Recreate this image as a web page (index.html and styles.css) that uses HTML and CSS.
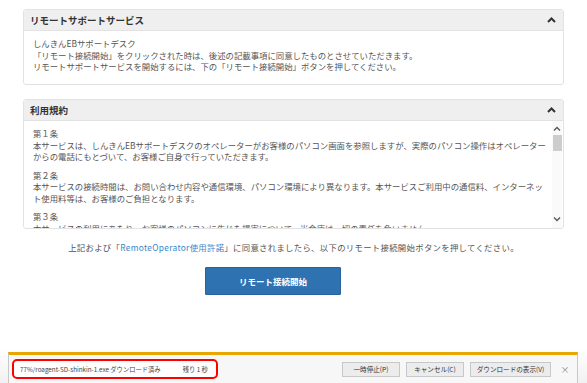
FILE: index.html
```html
<!DOCTYPE html>
<html lang="ja">
<head>
    <meta charset="UTF-8">
    <meta name="viewport" content="width=device-width, initial-scale=1.0">
    <title>リモートサポートサービス</title>
    <link rel="stylesheet" href="styles.css">
</head>
<body>
    <div class="page">
        <div class="panel">
            <div class="panel-head">
                <span>リモートサポートサービス</span>
                <svg class="caret" width="9" height="6" viewBox="0 0 9 6"><polyline points="1,5 4.5,1.5 8,5" fill="none" stroke="#333" stroke-width="2"/></svg>
            </div>
            <div class="panel-body intro">
                <p>しんきんEBサポートデスク<br>「リモート接続開始」をクリックされた時は、後述の記載事項に同意したものとさせていただきます。<br>リモートサポートサービスを開始するには、下の「リモート接続開始」ボタンを押してください。</p>
            </div>
        </div>

        <div class="panel terms">
            <div class="panel-head">
                <span>利用規約</span>
                <svg class="caret" width="9" height="6" viewBox="0 0 9 6"><polyline points="1,5 4.5,1.5 8,5" fill="none" stroke="#333" stroke-width="2"/></svg>
            </div>
            <div class="panel-body scroll-body">
                <div class="scroll-text">
                    <p>第１条<br>本サービスは、しんきんEBサポートデスクのオペレーターがお客様のパソコン画面を参照しますが、実際のパソコン操作はオペレーター<br>からの電話にもとづいて、お客様ご自身で行っていただきます。</p>
                    <p>第２条<br>本サービスの接続時間は、お問い合わせ内容や通信環境、パソコン環境により異なります。本サービスご利用中の通信料、インターネッ<br>ト使用料等は、お客様のご負担となります。</p>
                    <p>第３条<br>本サービスの利用にあたり、お客様のパソコンに生じた損害について、当金庫は一切の責任を負いません。</p>
                </div>
                <div class="scrollbar">
                    <svg width="8" height="6" viewBox="0 0 8 6"><polyline points="1,4.5 4,1.5 7,4.5" fill="none" stroke="#555" stroke-width="1.3"/></svg>
                    <div class="thumb"></div>
                    <div class="track"></div>
                    <svg width="8" height="6" viewBox="0 0 8 6"><polyline points="1,1.5 4,4.5 7,1.5" fill="none" stroke="#555" stroke-width="1.3"/></svg>
                </div>
            </div>
        </div>

        <p class="agree">上記および「<a href="#">RemoteOperator使用許諾</a>」に同意されましたら、以下のリモート接続開始ボタンを押してください。</p>
        <div class="actions">
            <button class="start-btn">リモート接続開始</button>
        </div>
    </div>

    <div class="download">
        <div class="dl-bar">
            <div class="dl-status">
                <span>77%/roagent-SD-shinkin-1.exe ダウンロード済み</span>
                <span class="dl-left">残り 1 秒</span>
            </div>
            <div class="dl-buttons">
                <button class="dl-btn">一時停止(P)</button>
                <button class="dl-btn">キャンセル(C)</button>
                <button class="dl-btn wide">ダウンロードの表示(V)</button>
                <span class="dl-close">×</span>
            </div>
        </div>
    </div>
</body>
</html>
```

FILE: styles.css
```css
html, body {
    height: 100%;
}
body {
    margin: 0;
    font-family: "Noto Sans CJK JP", "Noto Sans", sans-serif;
    background: #fff;
    color: #555;
    display: flex;
    flex-direction: column;
}
.page {
    padding: 9px 23px 0;
}
.panel {
    border: 1px solid #e2e2e2;
    border-radius: 3px;
    background: #fff;
}
.panel + .panel {
    margin-top: 14px;
}
.panel-head {
    display: flex;
    align-items: center;
    justify-content: space-between;
    height: 20px;
    padding: 0 6px;
    background: #efefef;
    border-bottom: 1px solid #e2e2e2;
    border-radius: 3px 3px 0 0;
    font-size: 9.5px;
    font-weight: bold;
    color: #333;
}
.caret {
    margin-right: 1px;
}
.panel-body {
    padding: 7px 9px 0;
    font-size: 8.4px;
    line-height: 11.5px;
}
.panel-body p {
    margin: 0;
}
.intro {
    height: 46px;
}
.scroll-body {
    display: flex;
    height: 107px;
    padding: 0 1px 0 9px;
    overflow: hidden;
}
.scroll-text {
    flex: 1;
    padding-top: 7px;
    overflow: hidden;
    white-space: nowrap;
}
.scroll-text p {
    margin-bottom: 7px;
}
.scrollbar {
    width: 10px;
    display: flex;
    flex-direction: column;
    align-items: center;
    padding: 5px 0 6px;
    background: #fafafa;
}
.thumb {
    width: 9px;
    height: 16px;
    margin-top: 3px;
    background: #cdcdcd;
}
.track {
    flex: 1;
}
.agree {
    margin: 12px 0 0;
    text-align: center;
    font-size: 8.4px;
    line-height: 12px;
    letter-spacing: 0.3px;
    color: #555;
}
.agree a {
    color: #3a87c8;
    text-decoration: none;
}
.actions {
    display: flex;
    justify-content: center;
    margin-top: 14px;
}
.start-btn {
    width: 136px;
    height: 28px;
    margin-left: -41px;
    border: 1px solid #2a62a0;
    border-radius: 1px;
    background: #2f72b2;
    color: #fff;
    font-family: inherit;
    font-size: 8.5px;
    font-weight: bold;
}
.download {
    margin-top: auto;
    padding: 4px 9px 0 8px;
    background: linear-gradient(#fff, #f1f1f1);
}
.dl-bar {
    display: flex;
    align-items: center;
    justify-content: space-between;
    height: 28px;
    border-top: 3px solid #e8a600;
    border-left: 1px solid #c8c8c8;
    border-right: 1px solid #c8c8c8;
    background: #f7f7f7;
    padding: 0 4px 0 3px;
    font-size: 6.3px;
    color: #444;
}
.dl-status {
    display: flex;
    align-items: center;
    height: 16px;
    padding: 0 8px 0 6px;
    border: 2px solid #f00;
    border-radius: 5px;
    background: #fff;
    white-space: nowrap;
}
.dl-left {
    margin-left: 22px;
}
.dl-buttons {
    display: flex;
    align-items: center;
    gap: 6px;
}
.dl-btn {
    height: 15px;
    width: 58px;
    padding: 0;
    border: 1px solid #c8c8c8;
    background: #ececec;
    color: #333;
    font-family: inherit;
    font-size: 6.6px;
    white-space: nowrap;
}
.dl-btn.wide {
    width: 81px;
}
.dl-close {
    width: 16px;
    text-align: center;
    color: #888;
    font-size: 9px;
}
```
